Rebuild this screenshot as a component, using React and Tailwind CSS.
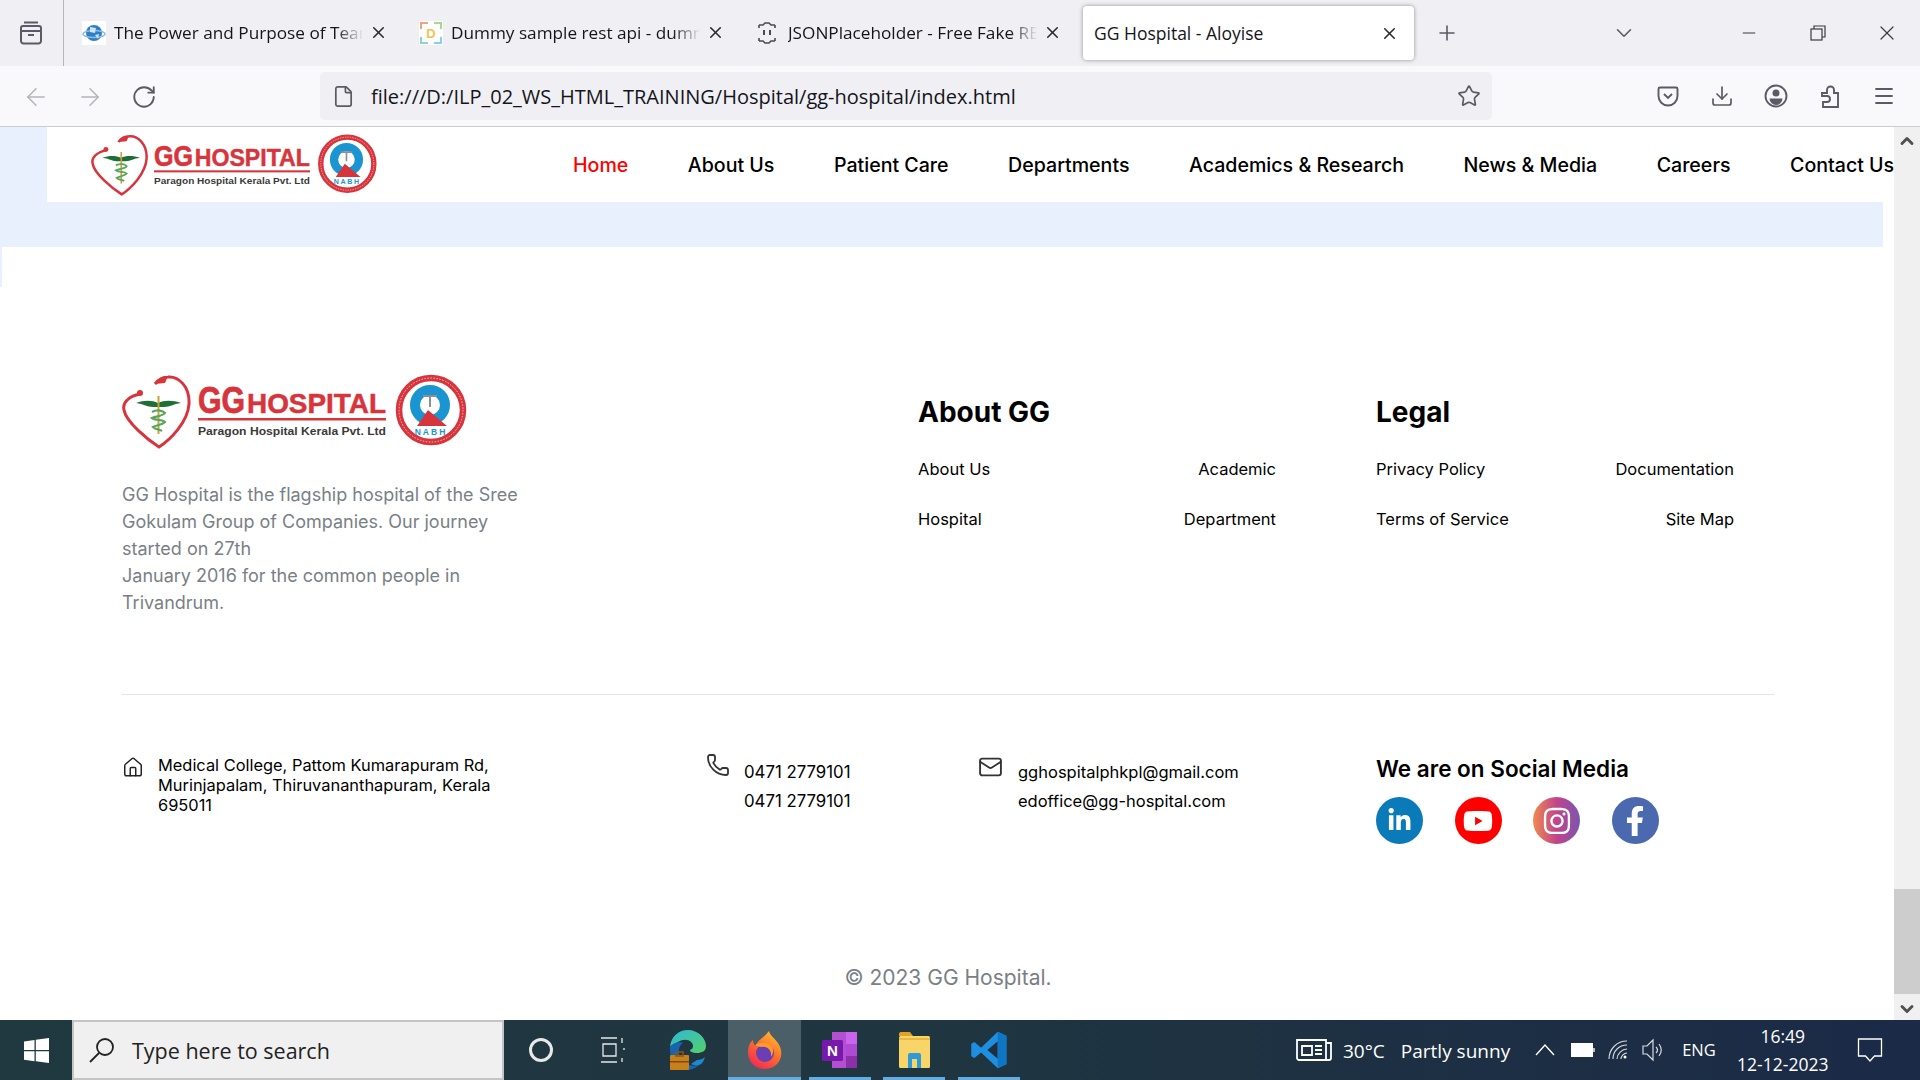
import React from "react";
import {
  ArrowLeft,
  ArrowRight,
  ChevronDown,
  ChevronUp,
  Download,
  File,
  House,
  Mail,
  Menu,
  Minus,
  Phone,
  Plus,
  RotateCw,
  Star,
  X,
} from "lucide-react";
import { FaFacebookF, FaInstagram, FaLinkedinIn, FaYoutube } from "react-icons/fa";

const tabs = [
  { title: "The Power and Purpose of Team", icon: "globe" },
  { title: "Dummy sample rest api - dumm", icon: "dummy" },
  { title: "JSONPlaceholder - Free Fake RE", icon: "json" },
];

const navItems = ["About Us", "Patient Care", "Departments", "Academics & Research", "News & Media", "Careers", "Contact Us"];

// Favicons of the three background tabs
const TabIcon = ({ type }) => {
  if (type === "globe") {
    return (
      <svg width="24" height="24" viewBox="0 0 24 24" className="bg-white">
        <circle cx="12" cy="12" r="8" fill="#2f7fc4" />
        <ellipse cx="12" cy="13" rx="11" ry="3.5" fill="none" stroke="#8dbbe2" strokeWidth="1.4" />
        <path d="M8 6l6 1-1 5-5-1zM13 14l4-1-1 5z" fill="#cfe4f5" />
      </svg>
    );
  }
  if (type === "dummy") {
    return (
      <svg width="24" height="24" viewBox="0 0 24 24" className="bg-white">
        <path d="M2 8V2h7" fill="none" stroke="#f2a27c" strokeWidth="2" />
        <path d="M15 2h7v6" fill="none" stroke="#a6d98a" strokeWidth="2" />
        <path d="M2 16v6h7" fill="none" stroke="#8cd6c4" strokeWidth="2" />
        <path d="M15 22h7v-6" fill="none" stroke="#86d0ef" strokeWidth="2" />
        <text x="12" y="17" textAnchor="middle" fontSize="13" fontWeight="700" fontFamily="Liberation Sans, sans-serif" fill="#f0c552">
          D
        </text>
      </svg>
    );
  }
  return (
    <svg width="22" height="24" viewBox="0 0 22 24" fill="none" stroke="#4a4a50" strokeWidth="1.6">
      <path d="M3 4h4l2-2h4l2 2h4M3 20h4l2 2h4l2-2h4M3 4v3M19 4v3M3 17v3M19 17v3" />
      <path d="M8 9v5M14 9v5" strokeWidth="2" />
    </svg>
  );
};

// Hospital logo, drawn once and scaled for header and footer
const Logo = ({ width, height }) => (
  <svg width={width} height={height} viewBox="0 0 346 78" className="shrink-0">
    <path d="M18 22C8 24 0 30 2 38 4 50 26 68 37 75 48 68 66 50 67 32 68 14 56 4 46 5 40 5 36 8 33 12" fill="none" stroke="#d8343c" strokeWidth="3" />
    <circle cx="18" cy="21" r="3" fill="#d8343c" />
    <path d="M33 12l5-6 8-2-3 7z" fill="#d8343c" />
    <path d="M14 31c8-3 16-3 22 0 6-3 15-3 23 0-8 1-11 4-17 4h-11c-6 0-9-3-17-4z" fill="#1d6f35" />
    <path d="M36.5 24v38" stroke="#c9a23a" strokeWidth="2" />
    <path d="M30 40c6-3 11-1 13 1 -2 3-8 3-13 5 4 3 10 1 13 4-3 3-8 3-12 5 3 3 6 2 9 4" fill="none" stroke="#5aa55c" strokeWidth="2.2" />
    <text x="76" y="41" fontSize="36" fontWeight="700" fontFamily="Liberation Sans, sans-serif" fill="#d8343c" stroke="#d8343c" strokeWidth="0.8" textLength="47" lengthAdjust="spacingAndGlyphs">
      GG
    </text>
    <text x="125" y="41" fontSize="28" fontWeight="700" fontFamily="Liberation Sans, sans-serif" fill="#d8343c" stroke="#d8343c" strokeWidth="0.5" textLength="139" lengthAdjust="spacingAndGlyphs">
      HOSPITAL
    </text>
    <rect x="76" y="46" width="188" height="2.5" fill="#d8343c" />
    <text x="76" y="63" fontSize="11.5" fontWeight="700" fontFamily="Liberation Sans, sans-serif" fill="#3a3a3a" textLength="188" lengthAdjust="spacingAndGlyphs">
      Paragon Hospital Kerala Pvt. Ltd
    </text>
    <circle cx="309" cy="38" r="32" fill="#fff" stroke="#d8343c" strokeWidth="6.5" />
    <circle cx="309" cy="38" r="32" fill="none" stroke="#f4c4c6" strokeWidth="1" strokeDasharray="1.5 1.5" />
    <circle cx="308" cy="33" r="15" fill="#fff" stroke="#1b95d2" strokeWidth="10" />
    <path d="M301 24h14M308 24v11" stroke="#8a8f98" strokeWidth="2" />
    <path d="M306 38l19 16h-30z" fill="#d8343c" />
    <text x="309" y="63" textAnchor="middle" fontSize="8.5" fontWeight="700" letterSpacing="2" fontFamily="Liberation Sans, sans-serif" fill="#1b95d2">
      NABH
    </text>
  </svg>
);

const BrowserChrome = () => (
  <div className="font-['Open_Sans',sans-serif]">
    {/* Tab strip */}
    <div className="flex h-[66px] items-center bg-[#f0f0f4] text-[#15141a]">
      <div className="flex h-full w-[64px] items-center justify-center border-r border-[#b5b5ba] pr-[2px]">
        <svg width="26" height="26" viewBox="0 0 26 26" fill="none" stroke="#5b5b66" strokeWidth="2">
          <path d="M6 2.5h14M3 8a2 2 0 0 1 2-2h16a2 2 0 0 1 2 2v13a2.500 2.500 0 0 1-2.500 2.500h-15A2.500 2.500 0 0 1 3 21zM3 11h20M10 15h6" />
        </svg>
      </div>
      <div className="flex w-[1019px]">
        {tabs.map((tab) => (
          <div key={tab.title} className="flex w-[337px] items-center pl-[18px]">
            <span className="flex w-[32px] shrink-0 items-center">
              <TabIcon type={tab.icon} />
            </span>
            <span className="w-[252px] whitespace-nowrap text-[17.2px] [mask-image:linear-gradient(to_right,black_88%,transparent_99%)]">
              {tab.title}
            </span>
            <X size={19} strokeWidth={2} className="ml-[3px] text-[#2b2a33]" />
          </div>
        ))}
      </div>
      <div className="flex h-[54px] w-[331px] items-center rounded-[4px] bg-white pl-[11px] pr-[15px] shadow-[0_0_4px_rgba(0,0,0,0.4)]">
        <span className="flex-1 text-[17.500px]">GG Hospital - Aloyise</span>
        <X size={19} strokeWidth={2} className="text-[#2b2a33]" />
      </div>
      <Plus size={24} strokeWidth={1.6} className="ml-[21px] text-[#5b5b66]" />
      <ChevronDown size={26} strokeWidth={1.5} className="ml-[152px] text-[#5b5b66]" />
      <Minus size={20} strokeWidth={1.2} className="ml-[102px] text-[#3a3a3f]" />
      <svg width="16" height="16" viewBox="0 0 16 16" fill="none" stroke="#3a3a3f" strokeWidth="1.200" className="ml-[51px]">
        <rect x="1" y="4" width="11" height="11" />
        <path d="M4 4V1h11v11h-3" />
      </svg>
      <X size={24} strokeWidth={1.2} className="ml-[49px] text-[#3a3a3f]" />
    </div>

    {/* Toolbar */}
    <div className="flex h-[61px] items-center border-b border-[#ccccd0] bg-[#f9f9fb] text-[#5b5b66]">
      <div className="flex w-[320px] items-center pl-[22px] pt-[1px]">
        <ArrowLeft size={28} strokeWidth={1.3} className="text-[#b4b4ba]" />
        <ArrowRight size={28} strokeWidth={1.3} className="ml-[26px] text-[#b4b4ba]" />
        <RotateCw size={26} strokeWidth={1.7} className="ml-[27px] text-[#5b5b66]" />
      </div>
      <div className="flex h-[48px] w-[1172px] items-center rounded-[5px] bg-[#f0f0f4] pl-[12px] pr-[11px]">
        <File size={23} strokeWidth={1.8} />
        <span className="ml-[16px] flex-1 pt-[2px] text-[20px] text-[#15141a]">
          file:///D:/ILP_02_WS_HTML_TRAINING/Hospital/gg-hospital/index.html
        </span>
        <Star size={24} strokeWidth={1.7} />
      </div>
      <div className="ml-[164px] flex items-center gap-[30px]">
        <svg width="24" height="24" viewBox="0 0 24 24" fill="none" stroke="#5b5b66" strokeWidth="1.900">
          <path d="M4 3.500h16a1.500 1.500 0 0 1 1.500 1.500v7a9.500 9.500 0 0 1-19 0V5A1.500 1.500 0 0 1 4 3.500z" />
          <path d="M8 10l4 4 4-4" />
        </svg>
        <Download size={24} strokeWidth={1.7} />
        <svg width="24" height="24" viewBox="0 0 24 24">
          <circle cx="12" cy="12" r="10.500" fill="none" stroke="#5b5b66" strokeWidth="1.900" />
          <circle cx="12" cy="9" r="3.500" fill="#5b5b66" />
          <path d="M5.500 14.500h13a6.500 6.500 0 0 1-13 0z" fill="#5b5b66" />
        </svg>
        <svg width="24" height="26" viewBox="0 0 24 26" fill="none" stroke="#5b5b66" strokeWidth="1.900">
          <path d="M4 10h5V7a3.500 3.500 0 0 1 7 0v3h4v14H5v-5h4a2.500 2.500 0 0 0 0-6H4z" />
        </svg>
        <Menu size={24} strokeWidth={1.8} />
      </div>
    </div>
  </div>
);

const Scrollbar = () => (
  <div className="flex w-[26px] flex-col items-center bg-[#f0f0f0] text-[#505050]">
    <ChevronUp size={20} strokeWidth={3.500} className="mt-[4px]" />
    <div className="mt-[738px] h-[105px] w-full bg-[#cdcdcd]" />
    <ChevronDown size={20} strokeWidth={3.500} className="mt-[5px]" />
  </div>
);

const SiteHeader = () => (
  <div>
    <div className="flex h-[75px]">
      <div className="w-[47px] bg-[#e8effd]" />
      <div className="flex flex-1 items-center overflow-hidden bg-white pl-[44px]">
        <Logo width={287} height={65} />
        <nav className="ml-[195px] flex gap-[59.5px] whitespace-nowrap pt-[2px] text-[19.6px] font-medium text-black">
          <a className="text-[#ff0000]">Home</a>
          {navItems.map((item) => (
            <a key={item}>{item}</a>
          ))}
        </nav>
      </div>
    </div>
    <div className="mr-[11px] h-[45px] bg-[#e8effd]" />
    <div className="h-[40px] w-[2px] bg-[#e8effd]" />
  </div>
);

const FooterLinks = ({ title, rows }) => (
  <div className="pt-[22px]">
    <h3 className="text-[28px] leading-[36px] font-bold text-black">{title}</h3>
    <div className="mt-[28px] flex flex-col gap-[28px] text-[16.5px] leading-[22px] text-black">
      {rows.map(([left, right]) => (
        <div key={left} className="flex justify-between">
          <a>{left}</a>
          <a>{right}</a>
        </div>
      ))}
    </div>
  </div>
);

const Footer = () => (
  <div className="bg-white pl-[122px] pr-[120px] text-black">
    <div className="mt-[85px] grid grid-cols-[696px_358px_358px] gap-x-[100px]">
      <div>
        <Logo width={346} height={78} />
        <p className="mt-[31px] w-[410px] text-[18px] leading-[27px] text-[#7a7f85]">
          GG Hospital is the flagship hospital of the Sree Gokulam Group of Companies. Our journey started on 27th
          <br />
          January 2016 for the common people in Trivandrum.
        </p>
      </div>
      <FooterLinks
        title="About GG"
        rows={[
          ["About Us", "Academic"],
          ["Hospital", "Department"],
        ]}
      />
      <FooterLinks
        title="Legal"
        rows={[
          ["Privacy Policy", "Documentation"],
          ["Terms of Service", "Site Map"],
        ]}
      />
    </div>

    <div className="mt-[78px] h-px bg-[#e4e4e4]" />

    <div className="mt-[60px] grid grid-cols-[584px_272px_398px_1fr]">
      <div className="flex">
        <House size={25} strokeWidth={1.6} className="w-[36px] shrink-0 pr-[14px] text-[#222]" />
        <p className="w-[350px] text-[16.4px] leading-[20px]">
          Medical College, Pattom Kumarapuram Rd, Murinjapalam, Thiruvananthapuram, Kerala 695011
        </p>
      </div>
      <div className="flex">
        <Phone size={24} strokeWidth={1.8} className="mt-[-2px] w-[38px] shrink-0 pr-[14px] text-[#333]" />
        <div className="mt-[6px] flex flex-col gap-[7px] text-[16.8px] leading-[22px]">
          <span>0471 2779101</span>
          <span>0471 2779101</span>
        </div>
      </div>
      <div className="flex">
        <Mail size={28} strokeWidth={1.8} className="mt-[-2px] w-[40px] shrink-0 pr-[15px] text-[#333]" />
        <div className="mt-[6px] flex flex-col gap-[7px] text-[16.5px] leading-[22px]">
          <span>gghospitalphkpl@gmail.com</span>
          <span>edoffice@gg-hospital.com</span>
        </div>
      </div>
      <div className="mt-[-2px]">
        <h4 className="text-[22.5px] leading-[32px] font-semibold">We are on Social Media</h4>
        <div className="mt-[12px] flex gap-[31.5px] text-white">
          <span className="flex h-[47px] w-[47px] items-center justify-center rounded-full bg-[#0a7ab8] text-[25px]">
            <FaLinkedinIn />
          </span>
          <span className="flex h-[47px] w-[47px] items-center justify-center rounded-full bg-[#fe0000] text-[30px]">
            <FaYoutube />
          </span>
          <span className="flex h-[47px] w-[47px] items-center justify-center rounded-full bg-[linear-gradient(90deg,#f08a4c,#c2448a,#7a56b0)] text-[30px]">
            <FaInstagram />
          </span>
          <span className="flex h-[47px] w-[47px] items-center justify-center rounded-full bg-[#4b69ae] text-[30px]">
            <FaFacebookF />
          </span>
        </div>
      </div>
    </div>

    <p className="mt-[120px] text-center text-[21px] leading-[28px] text-[#7a7f85]">© 2023 GG Hospital.</p>
  </div>
);

const Firefox = () => (
  <svg width="36" height="40" viewBox="0 0 36 40">
    <defs>
      <linearGradient id="foxOuter" x1="0.8" y1="0" x2="0.2" y2="1">
        <stop offset="0" stopColor="#ffc02e" />
        <stop offset="0.5" stopColor="#ff6a2b" />
        <stop offset="1" stopColor="#f0245a" />
      </linearGradient>
    </defs>
    <path d="M22 1c1 6 10 9 12 19 2 11-6 19-16 19S1 32 1 22c0-5 2-10 5-12 0 3 1 5 3 6 1-6 8-8 13-15z" fill="url(#foxOuter)" />
    <circle cx="18" cy="23" r="9" fill="#6a3fb4" />
    <path d="M8 15c5-3 11-3 15 0 4 3 4 8 1 12 1-6-3-11-9-10-3 0-5-1-7-2z" fill="#ff9a2a" />
  </svg>
);

const Edge = () => (
  <svg width="38" height="42" viewBox="0 0 38 42">
    <defs>
      <linearGradient id="edgeTop" x1="0" y1="0" x2="1" y2="1">
        <stop offset="0" stopColor="#2fb8d8" />
        <stop offset="1" stopColor="#54d267" />
      </linearGradient>
    </defs>
    <path d="M1 18C2 7 10 1 19 1c10 0 18 8 18 16 0 5-4 7-9 7-4 0-7-1-7-3 3-1 4-4 2-7-3-4-9-4-14-1-4 2-7 3-8 5z" fill="url(#edgeTop)" />
    <path d="M1 18c3-4 9-6 13-4-5 3-6 11 0 18 4 4 10 6 16 4-4 4-9 5-13 5C8 41 0 30 1 18z" fill="#1565b4" />
    <path d="M28 31c3 0 6-1 8-3-1 4-3 7-6 8-3 1-6 0-8-1z" fill="#1e88d0" />
    <rect x="1" y="26" width="19" height="15" rx="1" fill="#c8801e" />
    <rect x="7" y="23" width="7" height="4" fill="none" stroke="#8a5410" strokeWidth="1.500" />
    <rect x="1" y="32" width="19" height="1.500" fill="#7d4c0c" />
  </svg>
);

const OneNote = () => (
  <svg width="36" height="38" viewBox="0 0 36 38">
    <rect x="10" y="1" width="25" height="36" fill="#b34fd0" />
    <rect x="24" y="1" width="11" height="12" fill="#ca64ea" />
    <rect x="24" y="13" width="11" height="12" fill="#ae4bd5" />
    <rect x="24" y="25" width="11" height="12" fill="#8c2fa8" />
    <rect x="0" y="9" width="21" height="21" rx="1.500" fill="#7719aa" />
    <text x="10.500" y="25" textAnchor="middle" fontSize="15" fontWeight="700" fontFamily="Liberation Sans, sans-serif" fill="#fff">
      N
    </text>
  </svg>
);

const Explorer = () => (
  <svg width="33" height="38" viewBox="0 0 33 38">
    <path d="M1 3a2 2 0 0 1 2-2h9l3 4H1z" fill="#e0a32a" />
    <rect x="1" y="5" width="31" height="32" rx="1.500" fill="#f8d568" />
    <path d="M1 8h31" stroke="#e9b93f" strokeWidth="2" />
    <path d="M10 37V24a2 2 0 0 1 2-2h9a2 2 0 0 1 2 2v13h-4v-9h-5v9z" fill="#2f9ad8" />
  </svg>
);

const VsCode = () => (
  <svg width="38" height="38" viewBox="0 0 24 24">
    <path d="M17.500 0.500 23 3v18l-5.500 2.500L7 13.500 2.800 17 0.800 16V8l2-1L7 10.500z" fill="#1e8fe0" />
    <path d="M17.500 6.500 11 12l6.500 5.500z" fill="#1f2f3f" />
    <path d="M17.500 0.500 23 3v18l-5.500 2.500z" fill="#0f76c4" />
  </svg>
);

const Taskbar = () => (
  <div className="flex h-[60px] items-center bg-[linear-gradient(90deg,#203840,#1f3540_50%,#1b2a47)] font-['Open_Sans',sans-serif] text-white">
    <div className="flex w-[72px] justify-center">
      <svg width="25" height="25" viewBox="0 0 25 25" fill="#fff">
        <path d="M0 3.500 10.500 2v10H0zM11.800 1.800 25 0v12H11.800zM0 13.300h10.500v10L0 21.800zM11.800 13.300H25V25l-13.200-1.800z" />
      </svg>
    </div>
    <div className="flex h-full w-[432px] items-center border-2 border-[#c4c4c4] bg-[#f0f0f0] pl-[14px] text-[#222]">
      <svg width="28" height="28" viewBox="0 0 28 28" fill="none" stroke="#222" strokeWidth="1.800">
        <circle cx="17" cy="11" r="8" />
        <path d="M11 17 2 26" />
      </svg>
      <span className="ml-[16px] pt-[2px] text-[21.5px]">Type here to search</span>
    </div>
    <div className="flex h-full items-center">
      <div className="flex w-[74px] justify-center">
        <span className="h-[24px] w-[24px] rounded-full border-[3.500px] border-[#e6e8e9]" />
      </div>
      <div className="flex w-[70px] justify-center">
        <svg width="26" height="26" viewBox="0 0 26 26" fill="none" stroke="#e6e8e9" strokeWidth="1.300">
          <path d="M1 1h16M1 25h16M3 7h13v12H3zM22 1v5M22 21v4M24 11v2" />
        </svg>
      </div>
      <div className="flex w-[80px] justify-center">
        <Edge />
      </div>
      <TaskbarApp active width="w-[73px]">
        <Firefox />
      </TaskbarApp>
      <TaskbarApp width="w-[62px]" ml="ml-[8px]">
        <OneNote />
      </TaskbarApp>
      <TaskbarApp width="w-[62px]" ml="ml-[12px]">
        <Explorer />
      </TaskbarApp>
      <TaskbarApp width="w-[62px]" ml="ml-[13px]">
        <VsCode />
      </TaskbarApp>
    </div>
    <div className="ml-[276px] flex h-full items-center text-[19px]">
      <svg width="36" height="24" viewBox="0 0 36 24" fill="none" stroke="#fff" strokeWidth="1.800">
        <path d="M1 2h29v20H3a2 2 0 0 1-2-2zM30 5h5v15a2 2 0 0 1-2 2h-3" />
        <path d="M6 8h10v9H6zM19 8h7M19 12h7M19 16h7" />
      </svg>
      <span className="ml-[11px] pt-[2px]">30°C</span>
      <span className="ml-[16px] pt-[3px]">Partly sunny</span>
      <svg width="20" height="12" viewBox="0 0 20 12" fill="none" stroke="#fff" strokeWidth="1.400" className="ml-[25px]">
        <path d="M1 11 10 1l9 10" />
      </svg>
      <svg width="24" height="14" viewBox="0 0 24 14" className="ml-[16px]">
        <rect x="0.500" y="0.500" width="21" height="13" fill="#fff" stroke="#fff" />
        <rect x="22" y="5" width="2" height="4" fill="#bbb" />
      </svg>
      <svg width="20" height="20" viewBox="0 0 20 20" fill="none" stroke="#d8dde2" strokeWidth="1.100" className="ml-[13px]">
        <path d="M1 19C1 9 9 1 19 1M5 19C5 11 11 5 19 5M9 19c0-5 5-10 10-10M13 19c0-3 3-6 6-6" />
        <circle cx="17" cy="17" r="1.500" fill="#fff" stroke="none" />
      </svg>
      <svg width="24" height="24" viewBox="0 0 24 24" fill="none" stroke="#d8dde2" strokeWidth="1.200" className="ml-[14px]">
        <path d="M1 8h4l6-6v20l-6-6H1zM14 9c2 2 2 4 0 6M17 6c3 4 3 8 0 12" />
      </svg>
      <span className="ml-[16px] text-[16.5px]">ENG</span>
      <div className="ml-[20px] flex w-[94px] flex-col items-center text-[17.5px] leading-[28px]">
        <span>16:49</span>
        <span>12-12-2023</span>
      </div>
      <svg width="26" height="26" viewBox="0 0 26 26" fill="none" stroke="#fff" strokeWidth="1.300" className="ml-[27px]">
        <path d="M1.500 2h23v17h-7l-4.500 5-4.500-5h-7z" />
      </svg>
    </div>
  </div>
);

// Pinned taskbar app with the blue "running" line underneath
const TaskbarApp = ({ children, active, width, ml = "" }) => (
  <div className={`flex h-full flex-col items-center border-b-[3px] border-[#65ade0] pt-[3px] ${width} ${ml} ${active ? "bg-[#4a5f68]" : ""}`}>
    <div className="flex flex-1 items-center">{children}</div>
  </div>
);

export default function App() {
  return (
    <div className="flex h-[1080px] w-[1920px] flex-col overflow-hidden bg-white font-['Inter',sans-serif]">
      <BrowserChrome />
      <div className="flex h-[893px]">
        <div className="w-[1894px] overflow-hidden">
          <SiteHeader />
          <Footer />
        </div>
        <Scrollbar />
      </div>
      <Taskbar />
    </div>
  );
}
